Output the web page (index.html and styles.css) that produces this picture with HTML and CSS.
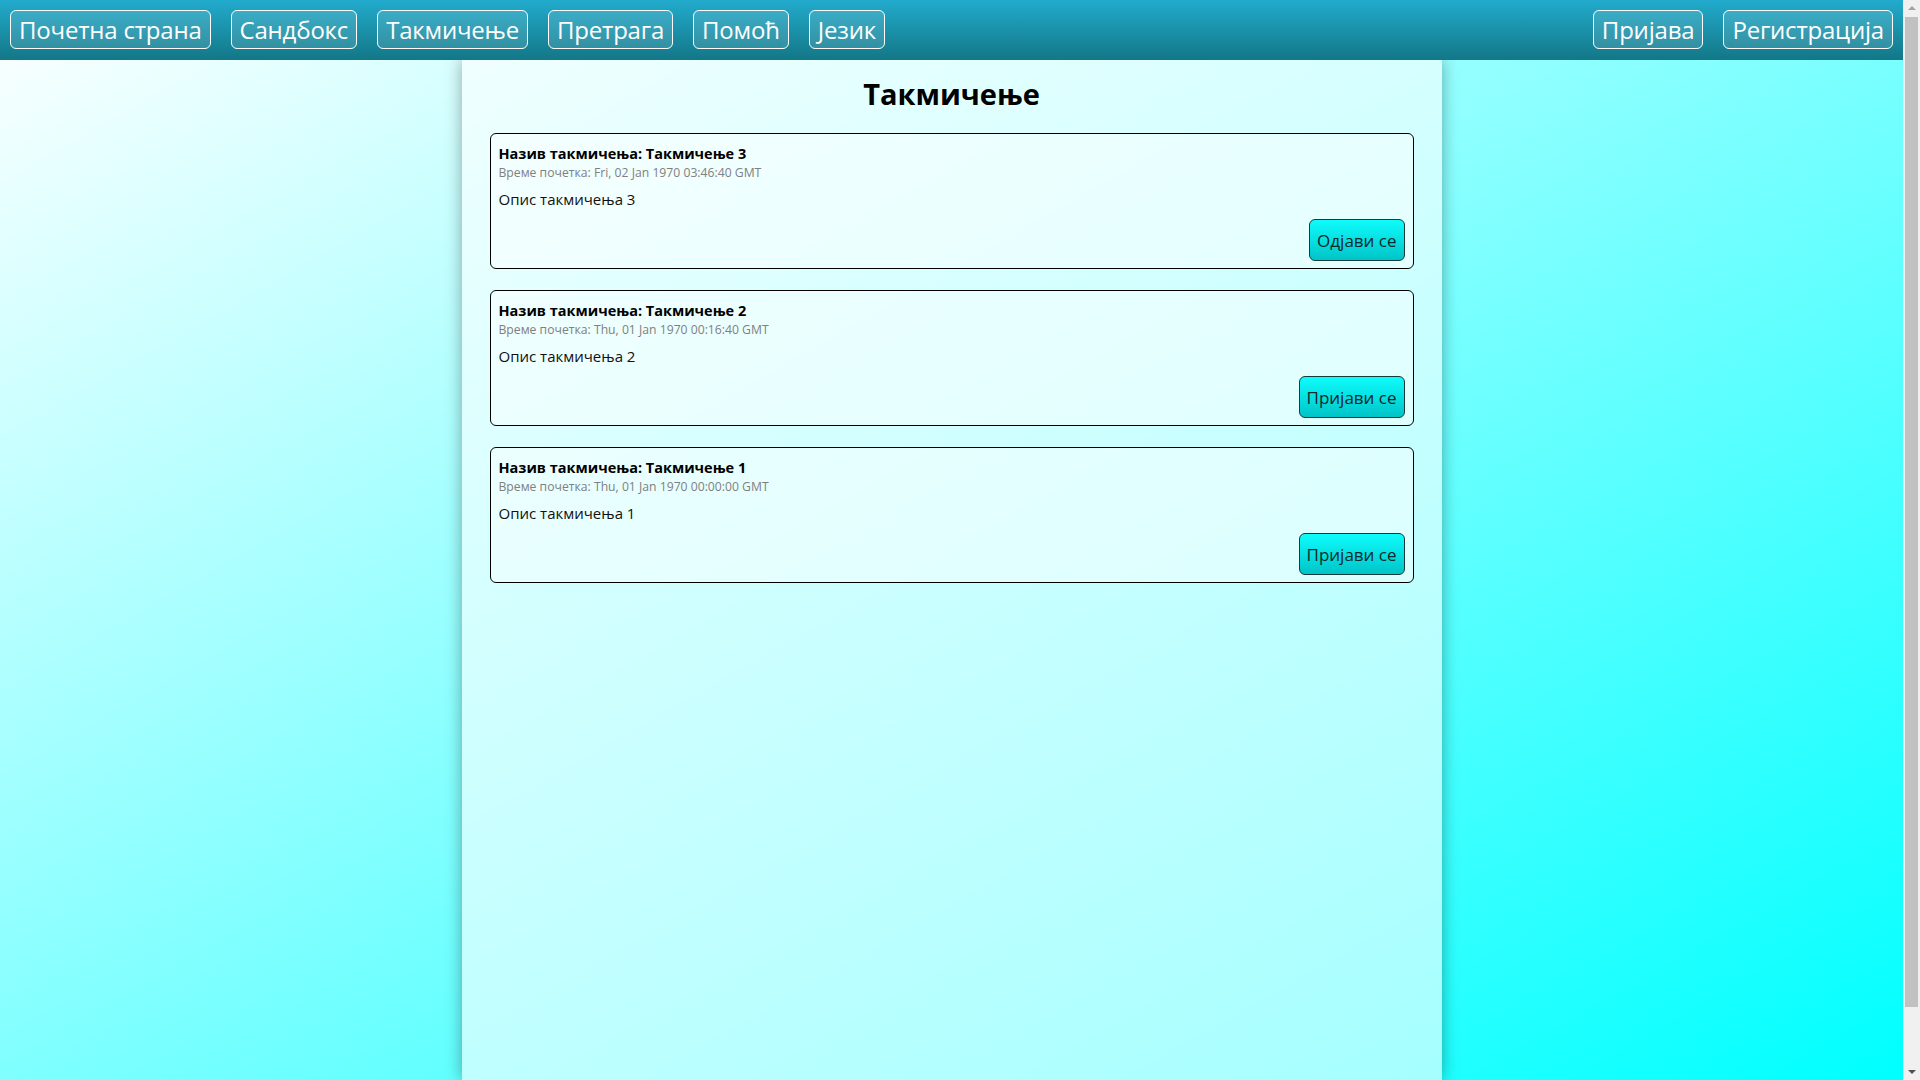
FILE: index.html
```html
<!DOCTYPE html>
<html lang="sr">
<head>
<meta charset="utf-8">
<title>Такмичење</title>
<link rel="stylesheet" href="styles.css">
</head>
<body>
<div class="page">
  <nav class="topbar">
    <div class="nav-group">
      <a class="nav-btn" href="#">Почетна страна</a>
      <a class="nav-btn" href="#">Сандбокс</a>
      <a class="nav-btn" href="#">Такмичење</a>
      <a class="nav-btn" href="#">Претрага</a>
      <a class="nav-btn" href="#">Помоћ</a>
      <a class="nav-btn" href="#">Језик</a>
    </div>
    <div class="nav-group">
      <a class="nav-btn" href="#">Пријава</a>
      <a class="nav-btn" href="#">Регистрација</a>
    </div>
  </nav>
  <main class="panel">
    <h1 class="page-title">Такмичење</h1>
    <section class="card">
      <div class="card-title">Назив такмичења: Такмичење 3</div>
      <div class="card-time">Време почетка: Fri, 02 Jan 1970 03:46:40 GMT</div>
      <div class="card-desc">Опис такмичења 3</div>
      <div class="card-actions"><button class="action-btn">Одјави се</button></div>
    </section>
    <section class="card">
      <div class="card-title">Назив такмичења: Такмичење 2</div>
      <div class="card-time">Време почетка: Thu, 01 Jan 1970 00:16:40 GMT</div>
      <div class="card-desc">Опис такмичења 2</div>
      <div class="card-actions"><button class="action-btn">Пријави се</button></div>
    </section>
    <section class="card">
      <div class="card-title">Назив такмичења: Такмичење 1</div>
      <div class="card-time">Време почетка: Thu, 01 Jan 1970 00:00:00 GMT</div>
      <div class="card-desc">Опис такмичења 1</div>
      <div class="card-actions"><button class="action-btn">Пријави се</button></div>
    </section>
  </main>
</div>
<div class="scrollbar" aria-hidden="true">
  <div class="sb-arrow sb-up"></div>
  <div class="sb-track"><div class="sb-thumb"></div></div>
  <div class="sb-arrow sb-down"></div>
</div>
</body>
</html>
```
FILE: styles.css
```css
html, body {
  margin: 0;
  height: 100%;
  overflow: hidden;
}
body {
  font-family: "Open Sans", "Noto Sans", sans-serif;
  background: #f0f0f0;
}
.page {
  width: calc(100% - 17px);
  height: 100%;
  overflow: hidden;
  background: linear-gradient(to bottom right, #ffffff, #00ffff);
  display: flex;
  flex-direction: column;
}
.topbar {
  flex: 0 0 60px;
  box-sizing: border-box;
  padding: 10px;
  display: flex;
  justify-content: space-between;
  background: linear-gradient(to bottom, #22abcd, #137787);
  position: relative;
  z-index: 2;
}
.nav-group {
  display: flex;
  gap: 20px;
}
.nav-btn {
  display: flex;
  align-items: center;
  height: 39px;
  box-sizing: border-box;
  padding: 0 8px;
  border: 1px solid #ffffff;
  border-radius: 6px;
  background: rgba(255, 255, 255, 0.12);
  color: #ffffff;
  text-decoration: none;
  font-size: 24px;
  letter-spacing: -0.2px;
}
.panel {
  flex: 1 0 auto;
  width: 980px;
  margin: 0 auto;
  box-sizing: border-box;
  padding: 1px 28px 20px;
  background: rgba(255, 255, 255, 0.6);
  box-shadow: 0 0 16px rgba(0, 0, 0, 0.35);
}
.page-title {
  margin: 13px 0 0;
  height: 59px;
  text-align: center;
  font-size: 29px;
  line-height: 40px;
  font-weight: 700;
  color: #000;
}
.card {
  border: 1px solid #000;
  border-radius: 6px;
  padding: 9px 8px 7px;
  margin-bottom: 21px;
  height: 136px;
  box-sizing: border-box;
  background: rgba(255, 255, 255, 0.45);
  display: flex;
  flex-direction: column;
}
.card-title {
  font-size: 14.5px;
  font-weight: 700;
  line-height: 21px;
  color: #000;
}
.card-time {
  font-size: 12.2px;
  line-height: 17px;
  color: #808080;
}
.card-desc {
  margin-top: 8px;
  font-size: 15px;
  line-height: 20px;
  color: #111;
}
.card-actions {
  margin-top: auto;
  display: flex;
  justify-content: flex-end;
}
.action-btn {
  height: 42px;
  padding: 0 7px;
  border: 1px solid #113c3c;
  border-radius: 6px;
  background: linear-gradient(to bottom, #0ffcfc, #00c4c8);
  font-family: "Open Sans", "Noto Sans", sans-serif;
  font-size: 17px;
  color: #0d2a2a;
  cursor: pointer;
}
.scrollbar {
  position: fixed;
  top: 0;
  right: 0;
  width: 17px;
  height: 100%;
  background: #f0f0f0;
  display: flex;
  flex-direction: column;
}
.sb-arrow {
  flex: 0 0 17px;
  position: relative;
}
.sb-up::after,
.sb-down::after {
  content: "";
  position: absolute;
  left: 5px;
  width: 0;
  height: 0;
  border-left: 4px solid transparent;
  border-right: 4px solid transparent;
}
.sb-up::after {
  top: 6px;
  border-bottom: 4px solid #a3a3a3;
}
.sb-down::after {
  top: 7px;
  border-top: 4px solid #505050;
}
.sb-track {
  flex: 1;
  padding: 0 2px;
  display: flex;
  flex-direction: column;
}
.sb-thumb {
  height: 990px;
  background: #c1c1c1;
}
```
